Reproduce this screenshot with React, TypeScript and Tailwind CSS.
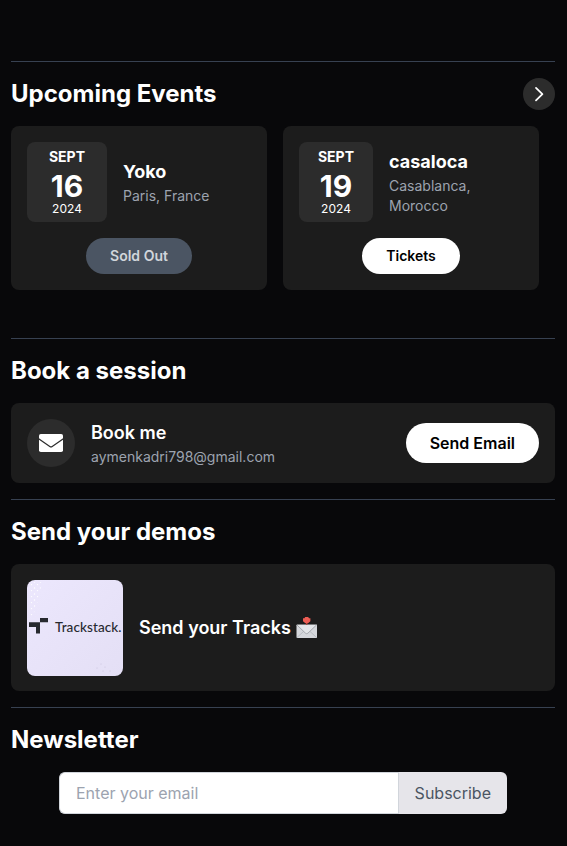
interface IEvent {
  id: number;
  day: string;
  name: string;
  location: string;
  soldOut: boolean;
  dateStyles: string;
}

const events: IEvent[] = [
  {
    id: 1,
    day: '16',
    name: 'Yoko',
    location: 'Paris, France',
    soldOut: true,
    dateStyles: 'w-20',
  },
  {
    id: 2,
    day: '19',
    name: 'casaloca',
    location: 'Casablanca, Morocco',
    soldOut: false,
    dateStyles: 'w-[74px]',
  },
];

interface SectionProps {
  title: string;
  styles?: string;
  action?: React.ReactNode;
  children: React.ReactNode;
}

const Section: React.FC<SectionProps> = ({
  title,
  styles = 'mb-4',
  action,
  children,
}) => (
  <section className={`border-t border-[#374151] pt-4 ${styles}`}>
    <div className="mb-4 flex h-8 items-center justify-between">
      <h2 className="text-2xl font-bold">{title}</h2>
      {action}
    </div>
    {children}
  </section>
);

const EventCard: React.FC<{ event: IEvent }> = ({ event }) => (
  <div className="flex h-[164px] w-64 shrink-0 flex-col items-center rounded-lg bg-[#1c1c1c] p-4">
    <div className="mb-4 flex w-full items-center">
      <div
        className={`flex h-20 shrink-0 flex-col items-center rounded-lg bg-[#2c2c2c] pt-[5px] text-center ${event.dateStyles}`}
      >
        <p className="mb-[3px] text-sm leading-5 font-bold">SEPT</p>
        <p className="text-3xl leading-8 font-bold">{event.day}</p>
        <p className="text-xs leading-[14px]">2024</p>
      </div>
      <div className="ml-4 flex-1">
        <h3 className="text-lg font-bold">{event.name}</h3>
        <p className="text-sm text-[#9ca3af]">{event.location}</p>
      </div>
    </div>
    {event.soldOut ? (
      <button
        disabled
        className="h-9 rounded-full bg-[#4b5563] px-6 text-sm font-semibold text-[#d1d5db]"
      >
        Sold Out
      </button>
    ) : (
      <button className="h-9 rounded-full bg-white px-6 text-sm font-semibold text-black">
        Tickets
      </button>
    )}
  </div>
);

const EnvelopeIcon: React.FC = () => (
  <svg className="h-[18px] w-6" viewBox="0 0 24 18" aria-hidden="true">
    <rect width="24" height="18" rx="1.8" fill="#fff" />
    <path
      d="M-.5 4.7 10.8 12.4q1.2.8 2.4 0L24.5 4.7"
      fill="none"
      stroke="#2c2c2c"
      strokeWidth="1.2"
    />
  </svg>
);

const TrackstackLogo: React.FC = () => (
  <svg
    className="size-24 rounded-lg"
    viewBox="0 0 96 96"
    role="img"
    aria-label="Trackstack"
  >
    <defs>
      <linearGradient id="cover" x1="0" y1="0" x2="1" y2="1">
        <stop offset="0" stopColor="#ece7fd" />
        <stop offset="1" stopColor="#e4dff5" />
      </linearGradient>
      <pattern id="dots" width="6" height="6" patternUnits="userSpaceOnUse">
        <circle cx="1.5" cy="2" r="0.7" fill="#fff" />
        <circle cx="4.5" cy="4.6" r="0.7" fill="#fff" />
      </pattern>
    </defs>
    <rect width="96" height="96" fill="url(#cover)" />
    <path d="M2 2h13L12 17 6 36H2z" fill="url(#dots)" />
    <g fill="#c9c3dc">
      <circle cx="74" cy="84" r="0.6" />
      <circle cx="78" cy="87" r="0.6" />
      <circle cx="76" cy="91" r="0.6" />
      <circle cx="83" cy="91" r="0.6" />
      <circle cx="70" cy="88" r="0.6" />
    </g>
    <path d="M13 38h8v4.2h-8zM2 42.3h11v11.2H9V47H2z" fill="#27292f" />
    <text
      x="28"
      y="52"
      fill="#27292f"
      fontFamily="Lato, sans-serif"
      fontSize="13.5"
      fontWeight="500"
      textLength="66.5"
    >
      Trackstack.
    </text>
  </svg>
);

const EnvelopeArrow: React.FC = () => (
  <svg className="ml-[5px] h-6 w-[22px]" viewBox="0 0 22 24" aria-hidden="true">
    <rect x="0.5" y="8.5" width="20.5" height="13.5" rx="0.7" fill="#d5d7dc" />
    <path d="M1 21.5 8 15M20.5 21.5 13.5 15" stroke="#b9bcc2" fill="none" />
    <path
      d="M1 9l8.5 8.2q1.2 1 2.4 0L20.5 9"
      stroke="#a5a8ae"
      fill="#e4e6e9"
    />
    <path d="M10 6h1.4v3H10z" fill="#a94640" />
    <path d="M7 2.3h1.3L9.3 1h2.8l1 1.3h1.3v3L12 7.2H9.4L7 5.3z" fill="#ed5d54" />
  </svg>
);

const App: React.FC = () => {
  return (
    <main className="min-h-[846px] bg-[#08080a] pt-[61px] pr-3 pl-[11px] font-['Inter',sans-serif] text-white">
      <Section
        title="Upcoming Events"
        styles="mb-12"
        action={
          <button
            aria-label="Next events"
            className="flex size-8 items-center justify-center rounded-full bg-[#2c2c2c]"
          >
            <svg
              className="size-4"
              viewBox="0 0 16 16"
              fill="none"
              stroke="currentColor"
              strokeWidth="1.8"
              strokeLinecap="round"
              strokeLinejoin="round"
            >
              <path d="m5 1.9 6.4 6.2L5 14.3" />
            </svg>
          </button>
        }
      >
        <div className="flex gap-4 overflow-hidden">
          {events.map((event) => (
            <EventCard key={event.id} event={event} />
          ))}
        </div>
      </Section>

      <Section title="Book a session">
        <div className="flex h-20 items-center rounded-lg bg-[#1c1c1c] px-4">
          <div className="mr-4 flex size-12 items-center justify-center rounded-full bg-[#2c2c2c]">
            <EnvelopeIcon />
          </div>
          <div className="flex-1">
            <h3 className="text-lg leading-7 font-semibold">Book me</h3>
            <p className="text-sm text-[#9ca3af]">aymenkadri798@gmail.com</p>
          </div>
          <button className="h-10 rounded-full bg-white px-6 font-semibold text-black">
            Send Email
          </button>
        </div>
      </Section>

      <Section title="Send your demos">
        <div className="flex h-[127px] items-start rounded-lg bg-[#1c1c1c] p-4">
          <TrackstackLogo />
          <h3 className="ml-4 flex h-24 items-center text-lg font-semibold">
            Send your Tracks
            <EnvelopeArrow />
          </h3>
        </div>
      </Section>

      <Section title="Newsletter" styles="">
        <form className="mx-12 flex h-[42px]">
          <input
            type="email"
            placeholder="Enter your email"
            className="min-w-0 flex-1 rounded-l-md border border-r-0 border-[#d1d5db] bg-white px-4 text-gray-900 placeholder:text-[#9ca3af]"
          />
          <button
            type="button"
            className="rounded-r-md border-l border-[#d1d5db] bg-[#e6e5ea] px-4 text-[#4b5563]"
          >
            Subscribe
          </button>
        </form>
      </Section>
    </main>
  );
};

export default App;
